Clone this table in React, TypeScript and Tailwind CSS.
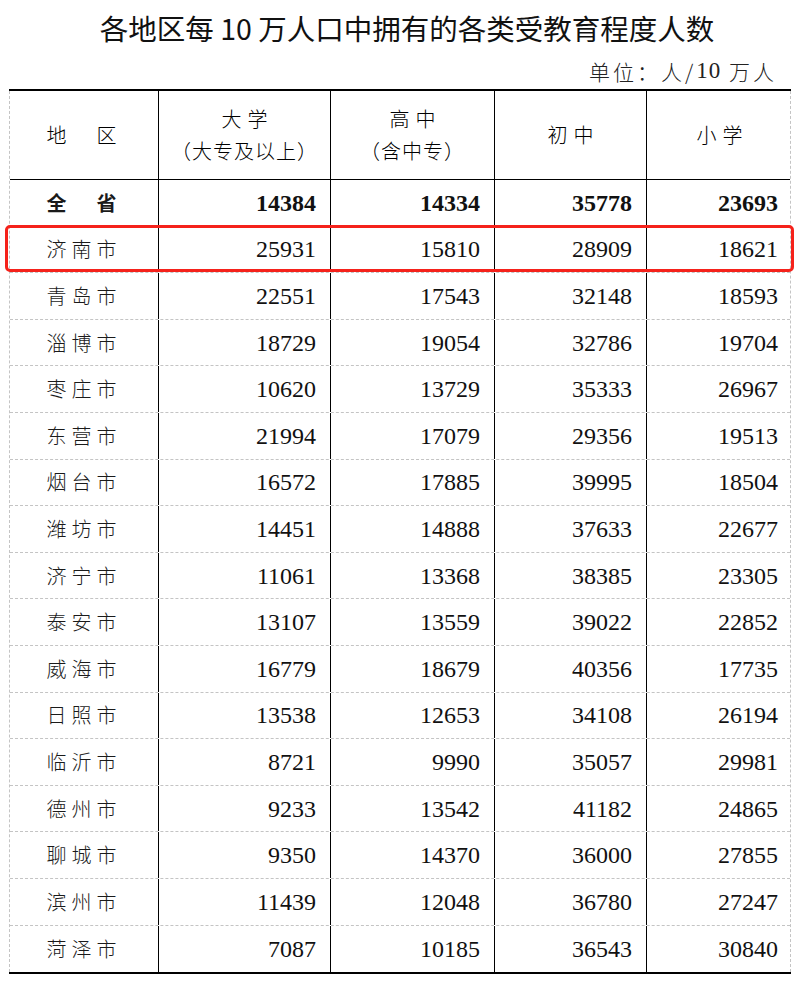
import React from 'react';

const rows: [string, number, number, number, number][] = [
  ['济南市', 25931, 15810, 28909, 18621],
  ['青岛市', 22551, 17543, 32148, 18593],
  ['淄博市', 18729, 19054, 32786, 19704],
  ['枣庄市', 10620, 13729, 35333, 26967],
  ['东营市', 21994, 17079, 29356, 19513],
  ['烟台市', 16572, 17885, 39995, 18504],
  ['潍坊市', 14451, 14888, 37633, 22677],
  ['济宁市', 11061, 13368, 38385, 23305],
  ['泰安市', 13107, 13559, 39022, 22852],
  ['威海市', 16779, 18679, 40356, 17735],
  ['日照市', 13538, 12653, 34108, 26194],
  ['临沂市', 8721, 9990, 35057, 29981],
  ['德州市', 9233, 13542, 41182, 24865],
  ['聊城市', 9350, 14370, 36000, 27855],
  ['滨州市', 11439, 12048, 36780, 27247],
  ['菏泽市', 7087, 10185, 36543, 30840],
];

const grid = 'grid grid-cols-[149px_172px_164px_152px_145px]';
const cjk = "font-['Noto_Sans_CJK_SC','Noto_Sans',sans-serif]";
const serif = "font-['Liberation_Serif','Noto_Sans_CJK_SC',serif]";

function Row({ name, values, bold }: { name: string; values: number[]; bold?: boolean }) {
  return (
    <div className={`${grid} h-[46.6px] border-b border-dashed border-[#c4c4c4] last:border-b-0`}>
      <div
        className={`flex items-center justify-center border-r-[1.5px] border-solid border-black text-[20px] tracking-[5px] text-[#1a1a1a] ${cjk} ${bold ? 'font-bold' : 'font-light'}`}
      >
        {name}
      </div>
      {values.map((v, i) => (
        <div
          key={i}
          className={`flex items-center justify-end pr-[14px] text-[24px] text-[#111] ${serif} ${bold ? 'font-bold' : 'font-normal'} ${i < 3 ? 'border-r-[1.5px] border-solid border-black' : ''}`}
        >
          {v}
        </div>
      ))}
    </div>
  );
}

export default function App() {
  return (
    <div className="w-[802px] h-[986px] bg-white text-black">
      {/* Title */}
      <h1 className={`pt-[9px] pl-[12px] text-center text-[28.5px] leading-[38px] text-[#111] ${cjk}`}>
        各地区每 10 万人口中拥有的各类受教育程度人数
      </h1>
      <div className={`flex justify-end h-[42px] pt-[12px] pr-[25px] text-[21px] leading-[24px] tracking-[3px] font-light text-[#222] ${cjk}`}>
        单位：人/<span className={`${serif} text-[23px] tracking-[1px]`}>10</span>&nbsp;万人
      </div>

      {/* Table */}
      <div className="relative ml-[9px] w-[782px] border-y-2 border-black">
        <div className="border-x border-dashed border-[#c4c4c4]">
          <div className={`${grid} h-[89px] border-b-[1.5px] border-black`}>
            <div className={`flex items-center justify-center border-r-[1.5px] border-black text-[20px] tracking-[5px] font-light ${cjk}`}>
              地　区
            </div>
            <div className={`flex flex-col items-center justify-center gap-[6px] border-r-[1.5px] border-black text-[20px] font-light leading-[26px] ${cjk}`}>
              <span className="tracking-[6px] pl-[6px]">大学</span>
              <span className="tracking-[1px]">（大专及以上）</span>
            </div>
            <div className={`flex flex-col items-center justify-center gap-[6px] border-r-[1.5px] border-black text-[20px] font-light leading-[26px] ${cjk}`}>
              <span className="tracking-[6px] pl-[6px]">高中</span>
              <span className="tracking-[1px]">（含中专）</span>
            </div>
            <div className={`flex items-center justify-center border-r-[1.5px] border-black text-[20px] tracking-[6px] pl-[6px] font-light ${cjk}`}>
              初中
            </div>
            <div className={`flex items-center justify-center text-[20px] tracking-[6px] pl-[6px] font-light ${cjk}`}>
              小学
            </div>
          </div>

          <Row name="全　省" values={[14384, 14334, 35778, 23693]} bold />
          {rows.map(([n, a, b, c, d]) => (
            <Row key={n} name={n} values={[a, b, c, d]} />
          ))}
        </div>

        {/* highlight */}
        <div className="pointer-events-none absolute left-[-4px] top-[134px] w-[789px] h-[47px] rounded-[5px] border-[3px] border-[#f5221b]" />
      </div>
    </div>
  );
}
